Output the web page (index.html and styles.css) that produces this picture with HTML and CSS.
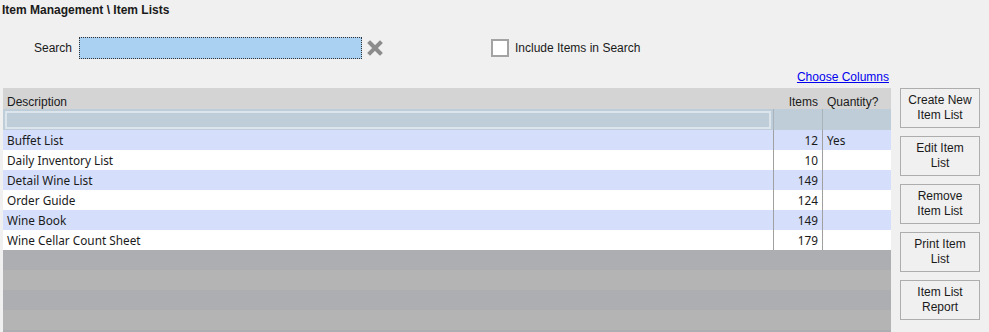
FILE: index.html
```html
<!DOCTYPE html>
<html lang="en">
<head>
    <meta charset="UTF-8">
    <title>Item Lists</title>
    <link rel="stylesheet" href="styles.css">
</head>
<body>

    <div class="title">Item Management \ Item Lists</div>

    <div class="search-row">
        <label for="search" class="search-label">Search</label>
        <input type="text" id="search" class="search-input">
        <span class="clear-btn" title="Clear">
            <svg width="16" height="16" viewBox="0 0 16 16">
                <path d="M3 3 L13 13 M13 3 L3 13" stroke="#8c8c8c" stroke-width="4" stroke-linecap="square"/>
            </svg>
        </span>
        <label class="include">
            <span class="check"></span>
            Include Items in Search
        </label>
    </div>

    <div class="main">
        <div class="left">
            <div class="link-row"><a href="#" class="choose-link">Choose Columns</a></div>
            <div class="grid">
                <div class="row head">
                    <div class="cell">Description</div>
                    <div class="cell num">Items</div>
                    <div class="cell">Quantity?</div>
                </div>
                <div class="row filter">
                    <div class="cell"><div class="filter-box"></div></div>
                    <div class="cell col"></div>
                    <div class="cell col"></div>
                </div>
                <div class="row alt">
                    <div class="cell">Buffet List</div>
                    <div class="cell col num">12</div>
                    <div class="cell col">Yes</div>
                </div>
                <div class="row">
                    <div class="cell">Daily Inventory List</div>
                    <div class="cell col num">10</div>
                    <div class="cell col"></div>
                </div>
                <div class="row alt">
                    <div class="cell">Detail Wine List</div>
                    <div class="cell col num">149</div>
                    <div class="cell col"></div>
                </div>
                <div class="row">
                    <div class="cell">Order Guide</div>
                    <div class="cell col num">124</div>
                    <div class="cell col"></div>
                </div>
                <div class="row alt">
                    <div class="cell">Wine Book</div>
                    <div class="cell col num">149</div>
                    <div class="cell col"></div>
                </div>
                <div class="row">
                    <div class="cell">Wine Cellar Count Sheet</div>
                    <div class="cell col num">179</div>
                    <div class="cell col"></div>
                </div>
                <div class="grid-empty"></div>
            </div>
        </div>

        <div class="buttons">
            <button type="button">Create New<br>Item List</button>
            <button type="button">Edit Item<br>List</button>
            <button type="button">Remove<br>Item List</button>
            <button type="button">Print Item<br>List</button>
            <button type="button">Item List<br>Report</button>
        </div>
    </div>

</body>
</html>
```

FILE: styles.css
```css
html, body {
    height: 100%;
}

body {
    margin: 0;
    background-color: #f0f0f0;
    font-family: "Liberation Sans", Arial, sans-serif;
    font-size: 12px;
    color: #1a1a1a;
    overflow: hidden;
    display: flex;
    flex-direction: column;
}

.title {
    font-weight: bold;
    padding: 3px 0 0 2px;
    line-height: 14px;
}

.search-row {
    display: flex;
    align-items: center;
    margin-top: 20px;
    padding-left: 34px;
    height: 22px;
}

.search-label {
    width: 45px;
}

.search-input {
    width: 283px;
    height: 22px;
    box-sizing: border-box;
    margin: 0;
    padding: 0 3px;
    border: 1px dotted #333;
    background-color: #abd1f2;
    outline: none;
}

.clear-btn {
    display: flex;
    margin-left: 5px;
}

.include {
    display: flex;
    align-items: center;
    margin-left: 108px;
}

.check {
    width: 14px;
    height: 14px;
    border: 2px solid #a3a3a3;
    background-color: #fff;
    margin-right: 6px;
}

.main {
    display: flex;
    flex: 1;
    min-height: 0;
}

.left {
    display: flex;
    flex-direction: column;
    margin-left: 3px;
    width: 888px;
}

.link-row {
    text-align: right;
    padding: 11px 2px 0 0;
    height: 18px;
    line-height: 14px;
}

.choose-link {
    color: #0000ee;
    text-decoration: underline;
}

.grid {
    display: flex;
    flex-direction: column;
    flex: 1;
    font-family: "Noto Sans", "Open Sans", sans-serif;
    font-size: 11.8px;
}

.row {
    display: grid;
    grid-template-columns: 770px 49px 69px;
    height: 20px;
    background-color: #fff;
}

.row.alt {
    background-color: #d5dffb;
}

.cell {
    padding: 0 4px;
    line-height: 20px;
    white-space: nowrap;
    overflow: hidden;
}

.cell.num {
    text-align: right;
}

.cell.col {
    border-left: 1px solid #a0a0a0;
}

.row.head {
    height: 21px;
    background-color: #d4d4d4;
    font-family: "Liberation Sans", Arial, sans-serif;
    font-size: 12px;
}

.row.head .cell {
    line-height: 14px;
    padding-top: 7px;
}

.row.head .cell:last-child {
    padding-left: 5px;
}

.row.filter {
    height: 21px;
    background-color: #bfcdd9;
}

.row.filter .cell {
    padding: 2px 2px 1px 2px;
    box-sizing: border-box;
}

.filter-box {
    height: 100%;
    box-sizing: border-box;
    border: 2px solid #dde5ec;
}

.row.filter .cell.col {
    border-left-color: #a9b3bc;
}

.grid-empty {
    flex: 1;
    background: repeating-linear-gradient(#adaeb1 0, #adaeb1 20px, #b4b4b4 20px, #b4b4b4 40px);
}

.buttons {
    display: flex;
    flex-direction: column;
    gap: 8px;
    margin-left: 9px;
    padding-top: 29px;
}

.buttons button {
    width: 80px;
    height: 40px;
    margin: 0;
    padding: 0;
    border: 1px solid #adadad;
    background-color: #f0f0f0;
    font-family: "Liberation Sans", Arial, sans-serif;
    font-size: 12px;
    line-height: 15px;
    color: #1a1a1a;
}
```
